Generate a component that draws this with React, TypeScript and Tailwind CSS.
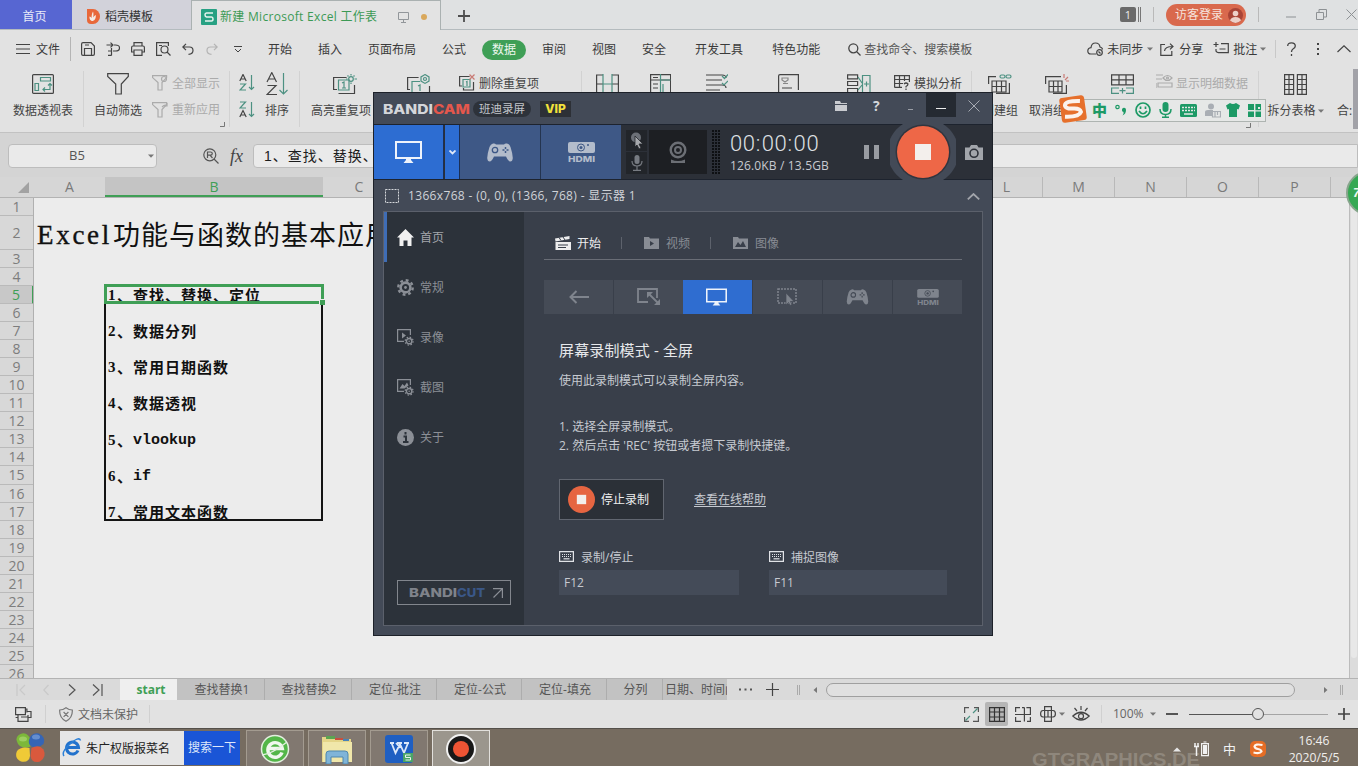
import React from "react";

type SvgProps = { w: number; h: number; vb?: string; sw?: number; className?: string; children: React.ReactNode };

const Ico = ({ w, h, vb, sw = 1.2, className = "", children }: SvgProps) => (
  <svg width={w} height={h} viewBox={vb ?? `0 0 ${w} ${h}`} fill="none" stroke="currentColor" strokeWidth={sw} className={`block shrink-0 ${className}`}>
    {children}
  </svg>
);

const Caret = ({ className = "" }: { className?: string }) => (
  <Ico w={6} h={4} className={`text-[#777] ${className}`}>
    <path d="M0 0.5h6L3 3.8z" fill="currentColor" stroke="none" />
  </Ico>
);

/* ---------- title bar ---------- */
const TitleBar = () => (
  <div className="flex h-[30px] shrink-0 border-b border-[#b4bbbe] bg-[#dfe1e2] text-[12px] leading-[30px]">
    <div className="h-[29px] w-[72px] shrink-0 bg-[#5766d2] pt-[2px] pr-[3px] text-center text-[#e8eaf8]">首页</div>
    <div className="flex h-[29px] w-[119px] shrink-0 items-center bg-[#d2d2da] pt-[4px] text-[#333]">
      <svg width="14" height="15" viewBox="0 0 14 15" className="ml-[14px]">
        <path d="M1 0h6a7 7.5 0 0 1 0 15H5a4 4 0 0 1-4-4z" fill="#e8683a" />
        <path d="M7 2.500c.8 2 .3 4 .3 6 .8-1 1.200-2 2.600-2.500 0 3-.8 5.500-3.200 6C4 12 3.300 9.500 3.500 7.500c1 .2 1.600.8 2 1.700C5.800 7 5.500 5 7 2.500z" fill="#f4ece6" />
      </svg>
      <span className="ml-[5px] whitespace-nowrap">稻壳模板</span>
    </div>
    <div className="flex h-[30px] w-[250px] shrink-0 items-center border-x border-t border-[#aab1b1] bg-[#e3e3e3] pt-[3px] text-[#3c9a55]">
      <svg width="16" height="16" viewBox="0 0 16 16" className="ml-[9px] shrink-0">
        <rect width="16" height="16" rx="1" fill="#27a183" />
        <path d="M12 4H5.500Q4 4 4 5.800T5.500 7.900h5Q12 8 12 10t-1.500 2H4" fill="none" stroke="#e6f4ef" strokeWidth="1.500" />
      </svg>
      <span className="ml-[3px] w-[160px] whitespace-nowrap text-[12px] tracking-[0.300px]">新建 Microsoft Excel 工作表</span>
      <Ico w={11} h={11} className="ml-[18px] text-[#92969a]" sw={1}>
        <path d="M.5 .5h10v7H.5zM5.500 8v2M3 10.500h5" />
      </Ico>
      <i className="ml-[12px] h-[6px] w-[6px] rounded-full bg-[#d9a85c]" />
    </div>
    <Ico w={12} h={12} sw={1.800} className="ml-[17px] mt-[10px] text-[#4e4e4e]">
      <path d="M6 0v12M0 6h12" />
    </Ico>
    <div className="ml-auto flex items-center text-[#666]">
      <span className="h-[15px] w-[16px] rounded-[2px] bg-[#6a6a6a] text-center text-[11px] leading-[15px] text-[#eee]">1</span>
      <i className="ml-[2px] h-[15px] w-[3px] border-x border-[#777]" />
      <i className="ml-[12px] h-[15px] w-px bg-[#b9b9b9]" />
      <div className="ml-[12px] flex h-[22px] w-[80px] items-center rounded-full bg-[#d9694d] pl-[9px] pt-[1px] text-[#f6e3dc]">
        <span className="whitespace-nowrap">访客登录</span>
        <svg width="15" height="15" viewBox="0 0 15 15" className="ml-[5px]">
          <circle cx="7.500" cy="7.500" r="7.500" fill="#a94436" />
          <circle cx="7.500" cy="5.500" r="2.800" fill="#edd0c8" />
          <path d="M2 12.600Q3 9 7.500 9T13 12.600Q10.500 15 7.500 15T2 12.600z" fill="#edd0c8" />
        </svg>
      </div>
      <i className="ml-[12px] h-[15px] w-px bg-[#b9b9b9]" />
      <Ico w={10} h={10} sw={1} className="ml-[27px] text-[#8d9194]"><path d="M0 7h10" /></Ico>
      <Ico w={11} h={11} sw={1} className="ml-[20px] text-[#8d9194]"><path d="M.5 3.500h7v7h-7zM3 3.500V.5h7.500V8H8" /></Ico>
      <Ico w={11} h={11} sw={1} className="ml-[19px] mr-[1px] text-[#8d9194]"><path d="M.5 .5l10 10M10.500 .5l-10 10" /></Ico>
    </div>
  </div>
);

/* ---------- menu row ---------- */
const MenuRow = () => (
  <div className="flex h-[36px] shrink-0 items-center whitespace-nowrap pt-[2px] text-[12px] leading-[18px] text-[#3a3a3a] [&>span]:translate-y-px">
    <Ico w={14} h={10} sw={1} className="ml-[16px] text-[#444]"><path d="M0 .5h14M0 5h14M0 9.500h14" /></Ico>
    <span className="ml-[6px] w-[24px]">文件</span>
    <i className="ml-[10px] h-[24px] w-px bg-[#b4b4b4]" />
    <Ico w={14} h={14} className="ml-[10px] text-[#444]"><path d="M.6 2Q.6.6 2 .6h8l3.400 3.400v8q0 1.400-1.400 1.400H2Q.6 13.400.6 12zM3.500 13V6.500h7V13M4 3h4" /></Ico>
    <Ico w={14} h={14} className="ml-[11px] text-[#444]"><path d="M.5 3h6M4.500.6L7 3 4.500 5.400M8 3h1.500q4 0 4 3t-4 3H7M5.500 6v7.500M2 9h3.500M2 13.400h3.500" /></Ico>
    <Ico w={14} h={14} className="ml-[11px] text-[#444]"><path d="M3 4V.6h8V4M3 10H.6V5.500Q.6 4 2 4h10q1.400 0 1.400 1.500V10H11M3 8h8v5.400H3z" /></Ico>
    <Ico w={15} h={14} className="ml-[11px] text-[#444]"><path d="M6 13.400H.6V.6h11.800V4" /><circle cx="8.500" cy="7.500" r="3.500" /><path d="M11 10l3.500 3.500M3 3.500h3" /></Ico>
    <Ico w={12} h={12} className="ml-[11px] text-[#444]"><path d="M4 .8L.8 4 4 7.200M1 4h6.500Q11 4 11 7.500T6.500 11.400" /></Ico>
    <Ico w={12} h={12} className="ml-[12px] text-[#b4b4b4]"><path d="M8 .8L11.200 4 8 7.200M11 4H4.500Q1 4 1 7.500t4.500 3.900" /></Ico>
    <Ico w={8} h={7} sw={1} className="ml-[16px] text-[#444]"><path d="M0 .5h8M1 3l3 3 3-3" /></Ico>
    <span className="ml-[26px]">开始</span>
    <span className="ml-[26px]">插入</span>
    <span className="ml-[26px]">页面布局</span>
    <span className="ml-[26px]">公式</span>
    <span className="ml-[16px] h-[20px] w-[44px] rounded-full bg-[#3f9f56] text-center leading-[19px] text-[#eef7ef]">数据</span>
    <span className="ml-[16px]">审阅</span>
    <span className="ml-[26px]">视图</span>
    <span className="ml-[26px]">安全</span>
    <span className="ml-[29px]">开发工具</span>
    <span className="ml-[29px]">特色功能</span>
    <Ico w={13} h={13} sw={1.300} className="ml-[28px] text-[#444]"><circle cx="5.300" cy="5.300" r="4.500" /><path d="M8.500 8.500l4 4" /></Ico>
    <span className="ml-[3px] text-[#555]">查找命令、搜索模板</span>
    <Ico w={17} h={14} className="ml-[115px] text-[#444]"><path d="M9 12H4Q.8 12 .8 9T4 5.600Q4.500 1 8.500 1T13 5q2.500.6 2.500 2.500" /><circle cx="12.500" cy="10.500" r="2.800" /><path d="M11.500 9.500l2 2" /></Ico>
    <span className="ml-[3px]">未同步</span>
    <Caret className="ml-[4px]" />
    <Ico w={14} h={13} className="ml-[7px] text-[#444]"><path d="M5 1.500H.8v10.800h11V8M4.500 8q.5-4.500 8-4.500M10 .6l3 2.900-3 2.900" /></Ico>
    <span className="ml-[5px]">分享</span>
    <Ico w={16} h={14} className="ml-[10px] text-[#444]"><path d="M3 0v5M.5 2.500h5M8 1.600h7.300v9H5.500q-1.500 0-2.500-1.500V7M6.500 7h6" /></Ico>
    <span className="ml-[4px]">批注</span>
    <Caret className="ml-[3px]" />
    <i className="ml-[9px] h-[18px] w-px bg-[#c8c8c8]" />
    <Ico w={9} h={14} sw={1.300} className="ml-[11px] text-[#444]"><path d="M.7 4Q.7 .8 4.500 .8T8.300 4Q8.300 5.800 6 7 4.500 8 4.500 10M4.500 12v2" /></Ico>
    <Ico w={2} h={12} className="ml-[21px] text-[#444]"><path d="M0 1h2M0 6h2M0 11h2" strokeWidth="2" /></Ico>
    <Ico w={14} h={8} className="ml-[18px] text-[#444]"><path d="M.5 7L7 .8 13.500 7" /></Ico>
  </div>
);

/* ---------- ribbon ---------- */
const G = "#4d9182";

const Big = ({ cls, icon, label }: { cls: string; icon: React.ReactNode; label?: React.ReactNode }) => (
  <div className={`flex shrink-0 flex-col items-center whitespace-nowrap ${cls}`}>
    <div className="flex h-[26px] items-center">{icon}</div>
    <div className="mt-[5px] flex h-[18px] items-center">{label}</div>
  </div>
);

const Filter = ({ s = 16 }: { s?: number }) => (
  <path d={s > 16 ? "M.7.7h20.600v2.800l-7 7.500v10H8.700V11L.7 3.500z" : "M.6.6h14v2L10 7.500V15H6V7.500L.6 2.600z"} />
);

const Ribbon = () => (
  <div className="flex h-[66px] shrink-0 overflow-hidden pt-[5px] text-[12px] leading-[18px] text-[#444]">
    <Big cls="w-[84px] border-r border-[#d2d2d2] h-[56px] pl-[3px]" label="数据透视表" icon={
      <Ico w={22} h={20} className="text-[#444]"><rect x=".6" y=".6" width="20.800" height="18.800" rx="1" /><g stroke={G}><path d="M8.500 3.500h10v3.500h-10zM3 9.500h3.500v7H3zM11 15.500h7V9.500M16 11.500l2-2 2 2M13 13.500l-2 2 2 2" /></g></Ico>} />
    <Big cls="w-[68px]" label="自动筛选" icon={<Ico w={22} h={22} className="text-[#444]"><Filter s={22} /></Ico>} />
    <div className="flex w-[78px] shrink-0 flex-col border-r border-[#d2d2d2] h-[56px] text-[#ababab]">
      <div className="mt-[3px] flex h-[18px] items-center"><Ico w={16} h={16}><Filter /><circle cx="12" cy="4" r="2.500" /></Ico><span className="ml-[4px] translate-y-px">全部显示</span></div>
      <div className="mt-[9px] flex h-[18px] items-center"><Ico w={16} h={16}><Filter /><path d="M10 5q3-3 5-1M15 1v3h-3" /></Ico><span className="ml-[4px]">重新应用</span></div>
      <Ico w={5} h={5} sw={1} className="ml-auto mr-[4px] mt-[3px] text-[#777]"><path d="M4.500 0v4.500H0" /></Ico>
    </div>
    <div className="flex w-[32px] shrink-0 flex-col pl-[9px]">
      <Ico w={17} h={17} className="mt-[3px] text-[#444]"><path d="M.8 7L4 .5 7.200 7M2 5h4" /><g stroke={G}><path d="M1 10h5.500L1 16h6M12.500 1v14.500M10 13l2.500 2.500L15 13" /></g></Ico>
      <Ico w={17} h={17} className="mt-[10px] text-[#444]"><path d="M.8 16L4 9.500 7.200 16M2 14h4" /><g stroke={G}><path d="M1 1h5.500L1 7h6M12.500 1v14.500M10 13l2.500 2.500L15 13" /></g></Ico>
    </div>
    <Big cls="w-[38px] border-r border-[#d2d2d2] h-[56px] pr-[7px]" label="排序" icon={
      <Ico w={22} h={24} className="text-[#444]"><path d="M1 10L5.800.6 10.500 10M2.600 7h6.500M1.500 13.500h8.500L1 22.500h10" /><path d="M17.500 1v21M13.500 18l4 4 4-4" stroke={G} /></Ico>} />
    <Big cls="w-[80px] ml-[1px]" label="高亮重复项" icon={
      <Ico w={25} h={21} className="ml-[8px] text-[#444]"><path d="M4 15.500H.6v-12h13M21.500 11v8.500h-16" /><g stroke={G}><path d="M5.500 6h10.500v10H5.500zM9 9l2-1v6M9 14h4" /><circle cx="18" cy="5" r="2.300" /><path d="M18 0v1.500M18 8.500V10M13 5h1.500M21.500 5H24M14.500 1.500l1 1M21.500 1.500l-1 1" /></g></Ico>} />
    <Big cls="ml-[7px] w-[60px]" icon={
      <Ico w={25} h={21} className="text-[#444]"><path d="M4 15.500H1.600v-12h11M23.500 12v8" /><g stroke={G}><path d="M6 18V7.500h8M12 12l2-1v6" /><path d="M19 .6l4 2.300v4.200L19 9.400l-4-2.300V2.900z" /><circle cx="19" cy="5" r="1.500" /></g></Ico>} />
    <div className="flex h-[56px] w-[134px] shrink-0 border-r border-[#d2d2d2] pl-[11px] pt-[3px]">
      <Ico w={17} h={17} className="text-[#444]"><path d="M3 12H.6V2.500h10M14.500 8v8H4.500v-2" /><path d="M4 5.500h7V13H4zM7 8l1-.5V12" stroke={G} /><path d="M10.500.5l5 5M15.500.5l-5 5" stroke="#c97a74" /></Ico>
      <span className="ml-[3px] translate-y-px whitespace-nowrap">删除重复项</span>
    </div>
    <Big cls="w-[50px]" icon={<Ico w={23} h={20} className="text-[#444]"><path d="M7 1H.6v19M16 1h6.400v19M.6 10H7M16 10h6.400" /><path d="M7 0v20M16 0v20M7 10h9" stroke={G} /></Ico>} />
    <Big cls="w-[56px]" icon={<Ico w={21} h={20} className="text-[#444]"><path d="M.6.6h20v19H.6zM.6 6h20M3 3.500h5M3 10h5M3 14h5" /><path d="M10.500 0v20M10.500 6h10M13 10v8" stroke={G} /></Ico>} />
    <Big cls="w-[58px]" icon={<Ico w={22} h={20} className="text-[#444]"><path d="M0 1h16q4 0 4 3M0 6h16M0 11h16q4 0 4 3M0 16h14" /><path d="M16 2l2.500 2.500L22 .5M16 9l2 2 4-4" stroke={G} /></Ico>} />
    <Big cls="w-[84px]" icon={<Ico w={21} h={20} className="text-[#444]"><path d="M.6 20V2Q.6.6 2 .6h18.400V16M4 14h10" /><path d="M4 4h6v2L7 8 4 6zM5 9.500h5" stroke="#888" /></Ico>} />
    <Big cls="w-[58px]" icon={<Ico w={24} h={20} className="text-[#444]"><path d="M.6.8h10v4H.6zM.6 7.500h10v4H.6zM.6 14.500h10v4H.6z" /><path d="M15.500 1.500h7.500V20h-7.500zM17 10h5M19.500 7.500v5M11 3l4 6M11 16l4-5" stroke={G} /></Ico>} />
    <div className="flex h-[56px] w-[84px] shrink-0 border-r border-[#d2d2d2] pl-[6px] pt-[3px]">
      <Ico w={16} h={16} className="text-[#444]"><path d="M.6 13.400V1.600h14.800V8M.6 5.500h14.800M.6 9.500H9M5.500 1.600v12M10.500 1.600V7M.6 13.400H8" /><path d="M10 10q2-2 4 0 0 1.500-2 2.500v1M12 14.500V16" /></Ico>
      <span className="ml-[4px] translate-y-px whitespace-nowrap">模拟分析</span>
    </div>
    <Big cls="w-[56px]" label="创建组" icon={<Ico w={24} h={20} className="text-[#444]"><path d="M8 2.600H.6V10M21.400 9v10.400H8M4 7h14v11H4zM4 12.500h14M8.500 7v11M13.500 7v11" /><g stroke={G}><rect x="12" y="1" width="5" height="3" rx="1.500" /><rect x="18" y="1" width="5" height="3" rx="1.500" /></g></Ico>} />
    <Big cls="w-[58px] pr-[8px]" label="取消组合" icon={<Ico w={24} h={20} className="ml-[8px] text-[#444]"><path d="M16 2.600H.6V10M21.400 11v8.400H8M4 7h13v11H4zM4 12.500h13M8.500 7v11M13 7v11" /><path d="M19 4V0M20 6l3-3M21 7h3" stroke="#c97a74" /></Ico>} />
    <Big cls="w-[68px] ml-[2px]" icon={<Ico w={23} h={20} className="text-[#444]"><path d="M.6.8h21.800v10H.6zM.6 5.800h21.800M8 .8v10M15 .8v10" /><path d="M8 14H.6v5.400H8M15 14h7.400v5.400H15M8.500 16.700h6M11.500 14v5.500" stroke={G} /></Ico>} />
    <div className="flex h-[56px] w-[103px] shrink-0 border-r border-[#d2d2d2] pt-[3px] text-[#ababab]">
      <Ico w={17} h={15}><path d="M0 1h7M0 5h6M2 9h14v4H2zM0 9v5" /><path d="M7 4q4.500-5 9 0-4.500 5-9 0z" /><circle cx="11.500" cy="4" r="1" /></Ico>
      <span className="ml-[3px] translate-y-px whitespace-nowrap">显示明细数据</span>
    </div>
    <Big cls="w-[73px]" label={<><span>拆分表格</span><Caret className="ml-[2px]" /></>} icon={<Ico w={23} h={21} className="text-[#444]"><path d="M.6.6h9v19.800h-9zM13.400.6h9v19.800h-9zM.6 5.500h9M.6 10.500h9M.6 15.500h9M13.400 5.500h9M13.400 10.500h9M13.400 15.500h9M5 .6v19.800M18 .6v19.800" /></Ico>} />
    <div className="mt-[31px] w-[18px] shrink-0 whitespace-nowrap pl-[5px]">合:</div>
    <i className="ml-auto mt-[-2px] h-[60px] w-[5px] shrink-0 bg-[#a2a2a8]" />
  </div>
);

/* ---------- formula bar ---------- */
const FormulaBar = () => (
  <div className="flex h-[45px] shrink-0 items-center border-t border-[#c2c2c2] bg-[#d4d4d4] pt-[1px] text-[12px]">
    <div className="ml-[8px] flex h-[24px] w-[149px] items-center rounded-[4px] border border-[#bdbdbd] bg-[#eaeaea] pt-[1px] text-[#555]">
      <span className="w-[136px] text-center text-[13px]">B5</span>
      <Caret className="ml-[3px]" />
    </div>
    <Ico w={17} h={16} className="ml-[46px] text-[#555]"><circle cx="6.800" cy="6.800" r="6" /><path d="M11 11l4.500 4.500M4.500 10V4h3q1.800 0 1.800 1.600T7.500 7.200h-3M7 7.200L9.500 10" /></Ico>
    <span className="ml-[10px] w-[23px] font-['Liberation_Serif'] text-[18px] italic leading-[20px] text-[#444]">fx</span>
    <div className="flex h-[24px] flex-1 items-center rounded-l-[4px] border border-[#bdbdbd] bg-[#eaeaea] pl-[10px] pt-[1px] text-[14px] tracking-[1px] text-[#1c1c1c]">
      <span className="font-['Liberation_Sans','Noto_Sans_CJK_SC',sans-serif]">1、查找、替换、</span>
    </div>
  </div>
);

/* ---------- sheet ---------- */
const farCols = ["L", "M", "N", "O", "P"];
const rowNums = Array.from({ length: 22 }, (_, i) => i + 5);
const entries: [string, string, string][] = [
  ["1", "、查找、替换、定位", ""],
  ["2", "、数据分列", ""],
  ["3", "、常用日期函数", ""],
  ["4", "、数据透视", ""],
  ["5", "、", "vlookup"],
  ["6", "、", "if"],
  ["7", "、常用文本函数", ""],
];

const Sheet = () => (
  <div className="flex min-h-0 flex-1 flex-col">
    <div className="flex h-[21px] shrink-0 overflow-hidden border-b border-[#b3b3b3] bg-[#d6d6d6] text-[14px] leading-[20px] text-[#7a7a7a]">
      <div className="flex w-[34px] shrink-0 items-end justify-end pb-[4px] pr-[5px]">
        <Ico w={11} h={11}><path d="M11 0v11H0z" fill="#a2a2a2" stroke="none" /></Ico>
      </div>
      <div className="w-[71px] shrink-0 text-center">A</div>
      <div className="w-[218px] shrink-0 border-b-2 border-[#3f9f56] bg-[#c4c4c4] text-center text-[#3f9f56]">B</div>
      <div className="w-[72px] shrink-0 text-center">C</div>
      <div className="w-[576px] shrink-0" />
      {farCols.map((c) => (
        <div key={c} className="w-[72px] shrink-0 border-r border-[#b9b9b9] text-center">{c}</div>
      ))}
    </div>
    <div className="flex min-h-0 flex-1">
      <div className="flex w-[34px] shrink-0 flex-col overflow-hidden border-r border-[#b0b0b0] bg-[#d8d8d8] text-center text-[14px] text-[#7d7d7d]">
        <div className="h-[18px] shrink-0 border-b border-[#bababa] leading-[17px]">1</div>
        <div className="h-[34px] shrink-0 border-b border-[#bababa] leading-[33px]">2</div>
        <div className="h-[18px] shrink-0 border-b border-[#bababa] leading-[17px]">3</div>
        <div className="h-[18px] shrink-0 border-b border-[#bababa] leading-[17px]">4</div>
        {rowNums.map((n) => (
          <div key={n} className={n === 5 ? "-mr-px h-[18.060px] shrink-0 border-b border-r-2 border-b-[#bababa] border-r-[#3f9f56] bg-[#c8c8c8] leading-[17px] text-[#3f9f56]" : "h-[18.060px] shrink-0 border-b border-[#bababa] leading-[17px]"}>{n}</div>
        ))}
      </div>
      <div className="flex-1 overflow-hidden bg-[#ececec] text-[#111]">
        <div className="mt-[18px] flex h-[34px] items-center whitespace-nowrap pl-[3px] pt-[4px]">
          <span className="w-[76px] font-['Liberation_Serif'] text-[27px] tracking-[2.700px] [-webkit-text-stroke:0.400px_#111]">Excel</span>
          <span className="text-[27px] tracking-[1px]">功能与函数的基本应用</span>
        </div>
        <div className="ml-[70px] mt-[34px] h-[237px] w-[219px] border-2 border-t-0 border-[#141414]">
          <div className="relative -ml-[2px] h-[20px] w-[220px] border-[3px] border-[#3f9f56]">
            <i className="absolute -bottom-[4px] -right-[4px] h-[6px] w-[6px] border-l border-t border-[#ececec] bg-[#3f9f56]" />
          </div>
          <div className="-mt-[21px] flex flex-col pl-[2px] text-[15px] font-bold">
            {entries.map(([n, zh, en]) => (
              <div key={n} className="flex h-[36.150px] items-start whitespace-nowrap leading-[24px]">
                <span className="w-[9px] font-['Liberation_Serif']">{n}</span>
                <span className="tracking-[1px]">{zh}</span>
                <span className="translate-y-px font-['Liberation_Mono']">{en}</span>
              </div>
            ))}
          </div>
        </div>
      </div>
      <div className="flex w-[9px] shrink-0 flex-col items-center border-l border-[#bcbcbc] bg-[#dcdcdc]">
        <i className="h-[460px] w-[6px] rounded-b-[3px] bg-[#e8e8e8]" />
      </div>
    </div>
  </div>
);

/* ---------- sheet tabs + status ---------- */
const tabCls = "shrink-0 overflow-hidden border-r border-[#adadad] bg-[#c2c2c2] text-center whitespace-nowrap";
const SheetTabs = () => (
  <div className="flex h-[22px] shrink-0 items-stretch border-t border-[#b3b3b3] bg-[#dadada] text-[12px] leading-[22px] text-[#555]">
    <div className="flex w-[120px] shrink-0 items-center">
      <Ico w={10} h={12} className="ml-[16px] text-[#c9c9c9]"><path d="M1 0v12M9 1L4 6l5 5" /></Ico>
      <Ico w={6} h={12} className="ml-[17px] text-[#c9c9c9]"><path d="M5.500 1L.8 6l4.700 5" /></Ico>
      <Ico w={8} h={12} className="ml-[19px] text-[#555]"><path d="M1 .5L7 6l-6 5.500" /></Ico>
      <Ico w={11} h={12} className="ml-[16px] text-[#555]"><path d="M1 .5L7 6l-6 5.500M10 0v12" /></Ico>
    </div>
    <div className="w-[57px] shrink-0 bg-[#efefef] pl-[5px] text-center font-bold text-[#3f9f56]">start</div>
    <div className={`w-[88px] pl-[3px] ${tabCls}`}>查找替换1</div>
    <div className={`w-[87px] pl-[2px] ${tabCls}`}>查找替换2</div>
    <div className={`w-[85px] pl-[2px] ${tabCls}`}>定位-批注</div>
    <div className={`w-[85px] pl-[2px] ${tabCls}`}>定位-公式</div>
    <div className={`w-[85px] pl-[2px] ${tabCls}`}>定位-填充</div>
    <div className={`w-[56px] pl-[2px] ${tabCls}`}>分列</div>
    <div className="w-[64px] shrink-0 overflow-hidden whitespace-nowrap bg-[#c2c2c2] pl-[2px]">日期、时间函数</div>
    <div className="flex flex-1 items-center">
      <Ico w={13} h={3} className="ml-[12px] text-[#555]"><path d="M0 1.500h2M5.500 1.500h2M11 1.500h2" strokeWidth="2" /></Ico>
      <Ico w={13} h={13} className="ml-[14px] text-[#444]"><path d="M6.500 0v13M0 6.500h13" /></Ico>
      <i className="ml-[18px] h-[10px] w-[3px] border-x border-[#aaa]" />
      <Ico w={4} h={6} className="ml-[13px] text-[#777]"><path d="M4 0v6L.5 3z" fill="currentColor" stroke="none" /></Ico>
      <i className="ml-[9px] h-[14px] w-[469px] rounded-full border border-[#9f9f9f] bg-[#e0e0e0]" />
      <Ico w={4} h={6} className="ml-[29px] text-[#777]"><path d="M0 0v6l3.500-3z" fill="currentColor" stroke="none" /></Ico>
      <i className="ml-[12px] h-[10px] w-[3px] border-x border-[#aaa]" />
    </div>
  </div>
);

const StatusBar = () => (
  <div className="flex h-[28px] shrink-0 items-center bg-[#e2e2e2] text-[12px] text-[#666]">
    <Ico w={17} h={15} className="ml-[15px] text-[#444]"><path d="M.6.6h9.800v7H.6zM10.400 2h1.500v3.500M3 7.600v6.800h10V10.500M.6 10.500H3M6 10h7M12 4.500h4v6h-3V8" /></Ico>
    <i className="ml-[13px] h-[18px] w-px bg-[#d0d0d0]" />
    <Ico w={14} h={15} className="ml-[13px] text-[#777]"><path d="M7 .7Q10 3 13.300 3 13.800 11 7 14.300.2 11 .7 3 4 3 7 .7zM4.600 5l4.800 4.800M9.400 5L4.600 9.800" /></Ico>
    <span className="ml-[5px] translate-y-px whitespace-nowrap">文档未保护</span>
    <i className="ml-[11px] h-[18px] w-px bg-[#d0d0d0]" />
    <div className="ml-auto flex items-center">
      <Ico w={15} h={15} className="text-[#555]"><path d="M5 .6H.6V6M14.400 9v5.400H9M.6 10v4.400H5M10 .6h4.400V5" /><path d="M9 6l4.500-4.500M1.500 13.500L6 9" stroke={G} /></Ico>
      <span className="ml-[6px] flex h-[24px] w-[23px] items-center justify-center rounded-[2px] bg-[#b6b6b6] text-[#333]">
        <Ico w={16} h={15}><path d="M.6.6h14.800v13.800H.6zM.6 5h14.800M.6 10h14.800M5.500.6v14M10.500.6v14" /></Ico>
      </span>
      <Ico w={16} h={15} className="ml-[7px] text-[#444]"><path d="M.6 5V.6H5M.6 10v4.400H6M0 7.500h15.400V.6h-4M9.400.6v13.800M12 14.400h3.400V10M7 .6h2.400" /></Ico>
      <Ico w={16} h={16} className="ml-[9px] text-[#444]"><path d="M4.600.6h6.800v14.800H4.600zM4.600 4.500H3Q.6 4.500.6 7.700T3 11h1.600M11.400 4.500H13q2.400 0 2.400 3.200T13 11h-1.600M4.600 4.500h6.800M4.600 11h6.800M8 4.500V11" /></Ico>
      <Caret className="ml-[3px]" />
      <Ico w={18} h={16} className="ml-[7px] text-[#444]"><path d="M.8 10Q9 2.500 17.200 10 9 18 .8 10zM9 0v4M2.500 2L5 5M15.500 2L13 5" /><circle cx="9" cy="10.200" r="2.500" /></Ico>
      <i className="ml-[11px] h-[18px] w-px bg-[#d0d0d0]" />
      <span className="ml-[11px] w-[33px]">100%</span>
      <Caret className="ml-[4px]" />
      <i className="ml-[10px] h-[2px] w-[12px] bg-[#555]" />
      <Ico w={139} h={14} className="ml-[11px] text-[#555]" sw={1}><path d="M0 7.500h63" /><path d="M75 7.500h64" stroke="#a5a5a5" /><circle cx="69" cy="7" r="5.500" /></Ico>
      <Ico w={12} h={12} sw={1.700} className="ml-[10px] mr-[8px] text-[#444]"><path d="M6 0v12M0 6h12" /></Ico>
    </div>
  </div>
);

/* ---------- taskbar ---------- */
const taskBtn = "flex h-[37px] w-[58px] shrink-0 items-center justify-center border border-b-0";
const Taskbar = () => (
  <div className="flex h-[38px] shrink-0 items-start overflow-hidden border-t border-[#54504a] bg-[#766c60] pt-px text-[12px]">
    <svg width="32" height="32" viewBox="0 0 32 32" className="ml-[15px] mt-[2px] shrink-0">
      <path d="M15.500 14.500Q8 18 3 12-1 5 5.500 2T16 8z" fill="#7cb83a" />
      <path d="M14 8Q16 0 24 1.500 31 5 28.500 12 23 17 16.500 14.500 13 12 14 8z" fill="#3565b5" />
      <path d="M14.500 16Q6 14 2 19-1 26 6 29.500 14 31 15 24z" fill="#efca37" />
      <path d="M16.500 16Q24 12 28.500 17.500 32 25 25 29.500 17 32 15.500 24z" fill="#d9593d" />
      <ellipse cx="8" cy="7" rx="4" ry="2.500" fill="#b4dc7c" opacity=".6" /><ellipse cx="21" cy="5" rx="4" ry="2.500" fill="#86aadf" opacity=".6" />
    </svg>
    <div className="ml-[13px] mt-[1px] flex h-[34px] w-[124px] shrink-0 items-center bg-[#e6e6e6] text-[#222]">
      <svg width="20" height="20" viewBox="0 0 20 20" className="ml-[2px] shrink-0">
        <path d="M16 12.500A6 6 0 1 1 16.500 9.500H5.500" fill="none" stroke="#2272cc" strokeWidth="3" />
        <path d="M2 18Q-1 14 8 6T18.500 2.500" fill="none" stroke="#2c80d8" strokeWidth="1.500" />
      </svg>
      <span className="ml-[4px] translate-y-px whitespace-nowrap">朱广权版报菜名</span>
    </div>
    <div className="mt-[1px] h-[34px] w-[56px] shrink-0 whitespace-nowrap bg-[#1a55d6] text-center leading-[34px] text-[#dfe8fa]">搜索一下</div>
    <div className={`ml-[6px] border-[#a39b90] bg-[#817870] ${taskBtn}`}>
      <svg width="30" height="30" viewBox="0 0 30 30">
        <circle cx="15" cy="15" r="13.500" fill="#53b648" stroke="#e3efdf" strokeWidth="1.500" />
        <path d="M22 18.500A7.300 7.300 0 1 1 22.300 14.500H9" fill="none" stroke="#f0f7ee" strokeWidth="3.400" />
        <path d="M2 21Q12 20 27 8" fill="none" stroke="#e3efdf" strokeWidth="1.300" />
      </svg>
    </div>
    <div className={`ml-[4px] border-[#a39b90] bg-[#817870] ${taskBtn}`}>
      <svg width="32" height="30" viewBox="0 0 32 30">
        <path d="M1 3h10l2 2h17v23H1z" fill="#e4d588" /><path d="M2 8h29v20H2z" fill="#f0e7aa" />
        <path d="M5 2h9v3H5z" fill="#5aa552" /><path d="M14 4h8v2h-8z" fill="#c94f3e" /><path d="M22 5h6v2h-6z" fill="#4a82b8" />
        <path d="M5 30V20q0-3 3-3h16q3 0 3 3v10h-5v-7H10v7z" fill="#7fb4d8" stroke="#4f87ae" />
      </svg>
    </div>
    <div className={`ml-[4px] border-[#a39b90] bg-[#817870] ${taskBtn}`}>
      <svg width="30" height="30" viewBox="0 0 30 30">
        <rect x="1" y="1" width="28" height="28" rx="3" fill="#1f5fc2" />
        <path d="M6 9h4M7.500 9l4 10 4.500-9 4 9L24 9M13 9h5M20 9h5M12 9l4.500 5" fill="none" stroke="#dce8fa" strokeWidth="1.800" />
        <rect x="19" y="19" width="10" height="9" fill="#4aa567" /><path d="M26.500 21h-5v2.500h5V26h-5" fill="none" stroke="#e8f5ec" />
      </svg>
    </div>
    <div className={`ml-[4px] border-[#e2e0dc] bg-[#9b968d] ${taskBtn}`}>
      <svg width="32" height="32" viewBox="0 0 32 32"><circle cx="16" cy="16" r="14" fill="#181818" stroke="#f2f2f2" strokeWidth="2" /><circle cx="16" cy="16" r="8" fill="#ee5434" /></svg>
    </div>
    <svg width="172" height="20" viewBox="0 0 172 20" className="ml-[542px] mt-[20px] shrink-0">
      <text x="0" y="16" textLength="168" lengthAdjust="spacingAndGlyphs" fontFamily="Liberation Sans" fontWeight="bold" fontSize="19" fill="#948c82" opacity=".85">GTGRAPHICS.DE</text>
    </svg>
    <div className="-ml-[31px] mt-[8px] flex h-[22px] items-center">
      <Ico w={8} h={5} className="text-[#e6e6e6]"><path d="M0 4.500h8L4 .5z" fill="currentColor" stroke="none" /></Ico>
      <Ico w={16} h={16} className="ml-[13px] text-[#f2f2f2]"><path d="M1 2v3M4 2v3M0 5.500h5M2.500 5v10" strokeWidth="1.500" /><path d="M7.600 2.600h6.800v12H7.600zM9.500 1h3" /><path d="M9 4h4v9H9z" fill="currentColor" stroke="none" /></Ico>
      <span className="ml-[13px] text-[13px] leading-[20px] text-[#f2f2f2]">中</span>
    </div>
    <svg width="18" height="18" viewBox="0 0 18 18" className="ml-[13px] mt-[10px] shrink-0">
      <rect x="1" y="1" width="16" height="16" rx="5" fill="#e56d25" />
      <path d="M13.500 5Q6 3.500 5.500 6.500 6 8.500 9 9t3.500 2.500Q11 14 4.500 12.500" fill="none" stroke="#fff5ec" strokeWidth="2.200" />
    </svg>
    <div className="ml-[16px] mt-[2px] w-[62px] shrink-0 text-center text-[12.200px] leading-[17px] text-[#f0efed]">
      <div>16:46</div>
      <div>2020/5/5</div>
    </div>
  </div>
);

/* ---------- recorder window ---------- */
const Pad = ({ w, h, hole }: { w: number; h: number; hole: string }) => (
  <svg width={w} height={h} viewBox="0 0 26 19" className="block shrink-0">
    <path d="M6 .5Q8 0 9 1.500h8Q18 0 20 .5q2.500.5 3.500 3.500 2 6 2.300 11-.3 3.500-2.500 3.500-2 0-4.300-5H7q-2.300 5-4.300 5Q.5 18.500.2 15 .5 10 2.500 4 3.500 1 6 .5z" fill="currentColor" />
    <circle cx="8" cy="7" r="2.700" fill="none" stroke={hole} strokeWidth="1.300" />
    <path d="M18.500 4v2M18.500 8v2M15.500 7h2M19.500 7h2" stroke={hole} strokeWidth="1.500" />
  </svg>
);

const Hdmi = ({ w, h, hole }: { w: number; h: number; hole: string }) => (
  <svg width={w} height={h} viewBox="0 0 27 20" className="block shrink-0">
    <rect y="0" width="27" height="11" rx="2" fill="currentColor" />
    <circle cx="13" cy="5.500" r="3.500" fill="none" stroke={hole} strokeWidth="1" />
    <circle cx="13" cy="5.500" r="1.500" fill={hole} /><circle cx="20" cy="3" r="1" fill={hole} />
    <text x="0" y="19.500" textLength="27" lengthAdjust="spacingAndGlyphs" fontFamily="Inter" fontWeight="800" fontSize="8" fill="currentColor">HDMI</text>
  </svg>
);

const Monitor = ({ w, h }: { w: number; h: number }) => (
  <svg width={w} height={h} viewBox="0 0 27 22" className="block shrink-0"><path d="M1 1h25v16H1z" fill="none" stroke="currentColor" strokeWidth="2" /><path d="M11 17h5v2l2.500 3h-10l2.500-3z" fill="currentColor" /></svg>
);

const StopDot = ({ s }: { s: number }) => (
  <svg width={s} height={s} viewBox="0 0 52 52" className="block shrink-0"><circle cx="26" cy="26" r="26" fill="#e66541" /><rect x="17" y="17" width="18" height="18" fill="#f3efec" /></svg>
);

const Keyb = () => (
  <Ico w={15} h={11} sw={1.200} className="text-[#e0e2e6]"><path d="M.6.6h13.800v9.800H.6z" /><path d="M3 3.500h9M3 5.500h9" strokeDasharray="1 1" /><path d="M4.500 7.800h6" /></Ico>
);

const gearPath = (
  <g><circle cx="8" cy="8" r="4.600" fill="none" stroke="currentColor" strokeWidth="2.400" /><circle cx="8" cy="8" r="6.800" fill="none" stroke="currentColor" strokeWidth="2.200" strokeDasharray="2.670 2.670" /><circle cx="8" cy="8" r="1.300" fill="currentColor" stroke="none" /></g>
);

const side: { label: string; icon: React.ReactNode; active?: boolean }[] = [
  { label: "首页", active: true, icon: <Ico w={17} h={17} className="text-[#f1f1f1]"><path d="M8.500 0L17 8.500h-2.500V17h-4v-5.500h-4V17h-4V8.500H0z" fill="currentColor" stroke="none" /></Ico> },
  { label: "常规", icon: <Ico w={17} h={17} vb="0 0 16 16">{gearPath}</Ico> },
  { label: "录像", icon: <Ico w={17} h={17}><path d="M7 12.400H.6V.6h12.800V6" /><path d="M5 3.500L9 6.500 5 9.500z" fill="currentColor" stroke="none" /><g transform="translate(7.500 7.500) scale(.58)">{gearPath}</g></Ico> },
  { label: "截图", icon: <Ico w={17} h={17}><path d="M7 12.400H.6V.6h12.800V6" /><path d="M2.500 9.500l3-4.500 2 2L10 3.500l1.500 3-4 3z" fill="currentColor" stroke="none" /><g transform="translate(7.500 7.500) scale(.58)">{gearPath}</g></Ico> },
  { label: "关于", icon: <Ico w={17} h={17}><circle cx="8.500" cy="8.500" r="8.500" fill="currentColor" stroke="none" /><path d="M8.500 3v2.500M6.500 7.500h2.500v5M6 13h5.500" stroke="#2c323a" strokeWidth="2" /></Ico> },
];

const modeCls = "flex h-[34px] w-[69px] shrink-0 items-center justify-center";

const Recorder = () => (
  <div className="absolute left-[373px] top-[92px] flex h-[544px] w-[620px] flex-col border border-[#1d2129] bg-[#434a57] text-[12px] text-[#c6cad1]">
    <div className="flex h-[31px] shrink-0 items-start">
      <svg width="87" height="13" viewBox="0 0 87 13" className="ml-[9px] mt-[9px]">
        <text x="0" y="11.500" textLength="50" lengthAdjust="spacingAndGlyphs" fontFamily="Inter" fontWeight="800" fontSize="13" fill="#d4d6da">BANDI</text>
        <text x="50" y="11.500" textLength="37" lengthAdjust="spacingAndGlyphs" fontFamily="Inter" fontWeight="800" fontSize="13" fill="#e4574c">CAM</text>
      </svg>
      <span className="ml-[3px] mt-[8px] h-[16px] w-[58px] rounded-full bg-[#2d323a] text-center text-[11.500px] leading-[16px] text-[#c3c6cb]">班迪录屏</span>
      <span className="ml-[9px] mt-[8px] h-[16px] w-[31px] bg-[#2d3036] text-center font-['Inter'] text-[12px] font-extrabold leading-[16px] text-[#f2e23c]">VIP</span>
      <Ico w={12} h={10} className="ml-[264px] mt-[8px] text-[#c9cbd0]"><path d="M0 0h5l1 2h6v1H0zM0 4h12v6H0z" fill="currentColor" stroke="none" /></Ico>
      <span className="ml-[26px] mt-[4px] w-[8px] text-[14px] font-bold leading-[18px] text-[#d5d7db]">?</span>
      <i className="ml-[27px] mt-[16px] h-px w-[5px] bg-[#9a9ea6]" />
      <div className="ml-[13px] flex h-[24px] w-[30px] justify-center bg-[#252a32]"><i className="mt-[15px] h-px w-[10px] bg-[#eceded]" /></div>
      <Ico w={12} h={12} sw={1} className="ml-[12px] mt-[7px] text-[#a7abb3]"><path d="M.5.5l11 11M11.500.5l-11 11" /></Ico>
    </div>

    <div className="flex h-[56px] shrink-0 border-y border-[#1d232e] bg-[#2c3038]">
      <div className="flex w-[70px] shrink-0 items-center justify-center border-r border-[#1b2f55] bg-[#2d6dd2] text-[#eef3fb]"><Monitor w={27} h={22} /></div>
      <div className="ml-px flex w-[15px] shrink-0 items-center justify-center border-r border-[#1b2f55] bg-[#2d6dd2]"><Ico w={7} h={5} sw={1.800} className="text-[#dfe8f8]"><path d="M.5.5l3 3 3-3" /></Ico></div>
      <div className="flex w-[81px] shrink-0 items-center justify-center border-r border-[#24344f] bg-[#3e5886] text-[#b3bccb]"><Pad w={26} h={19} hole="#3e5886" /></div>
      <div className="flex w-[80px] shrink-0 items-center justify-center bg-[#3e5886] text-[#b3bccb]"><Hdmi w={27} h={20} hole="#3e5886" /></div>
      <div className="ml-[5px] mt-[5px] flex w-[21px] shrink-0 flex-col gap-px text-[#777b82]">
        <div className="flex h-[21px] items-center justify-center bg-[#22252a]"><Ico w={14} h={17} className="text-[#6c7077]"><circle cx="6" cy="5.500" r="5" fill="currentColor" stroke="none" /><path d="M5 4l8 8H9l2 4-2 1-2-4-2 2z" fill="#a6a8ac" stroke="#22252a" strokeWidth=".8" /></Ico></div>
        <div className="flex h-[22px] items-center justify-center bg-[#22252a]"><Ico w={12} h={16}><rect x="3.500" y="0" width="5" height="9" rx="2.500" fill="currentColor" stroke="none" /><path d="M1 6q0 5 5 5t5-5M6 11v4M2 15.400h8" /></Ico></div>
      </div>
      <div className="ml-[2px] mt-[5px] flex h-[44px] w-[58px] shrink-0 items-center justify-center bg-[#1d1f23]">
        <Ico w={18} h={23} className="text-[#6c6f75]"><circle cx="9" cy="9" r="7.300" strokeWidth="2.400" /><circle cx="9" cy="9" r="3" strokeWidth="2" /><path d="M2 18.500q7 3 14 0V22H2z" fill="currentColor" stroke="none" /></Ico>
      </div>
      <Ico w={8} h={44} className="ml-[5px] mt-[5px] text-[#0e1013]"><path d="M1 0v44M4 0v44M7 0v44" strokeWidth="2" strokeDasharray="2 1" /></Ico>
      <div className="ml-[10px] w-[110px] shrink-0 pt-[9px]">
        <svg width="92" height="18" viewBox="0 0 92 18" className="block"><text x="0 12.800 25.800 31.800 44.600 57.600 63.600 76.400" y="17" fontFamily="Roboto" fontWeight="300" fontSize="22" fill="#dfe1e4">00:00:00</text></svg>
        <div className="mt-[5px] whitespace-nowrap leading-[18px] tracking-[0.150px] text-[#c8cad0]">126.0KB / 13.5GB</div>
      </div>
      <div className="ml-[24px] mt-[20px] flex gap-[5px]"><i className="h-[14px] w-[5px] bg-[#989ba1]" /><i className="h-[14px] w-[5px] bg-[#989ba1]" /></div>
      <div className="-my-px ml-[11px] h-[56px] w-[66px] shrink-0">
        <svg width="66" height="56" viewBox="0 0 66 56" className="block"><path d="M13 0h40a33 33 0 0 1 0 56H13a33 33 0 0 1 0-56z" fill="#434a57" /><circle cx="33" cy="28" r="27.500" fill="#31353f" /><circle cx="33" cy="28" r="26" fill="#ee6747" /><rect x="25" y="20" width="16" height="16" fill="#f3efec" /></svg>
      </div>
      <svg width="18" height="15" viewBox="0 0 18 15" className="ml-[9px] mt-[20px] shrink-0"><path d="M0 2.500h4.500L6 0h6l1.500 2.500H18V15H0z" fill="#a2a5ab" /><circle cx="9" cy="8.300" r="4" fill="none" stroke="#2c3038" strokeWidth="1.600" /></svg>
    </div>

    <div className="flex h-[31px] shrink-0 items-center pt-[1px]">
      <Ico w={14} h={14} sw={1} className="ml-[11px] text-[#d6d8dc]"><path d="M.5.5h13v13H.5z" strokeDasharray="2 1" /></Ico>
      <span className="ml-[9px] whitespace-nowrap tracking-[0.340px] text-[#d0d3d8]">1366x768 - (0, 0), (1366, 768) - 显示器 1</span>
      <Ico w={13} h={7} sw={1.800} className="ml-auto mr-[12px] text-[#a2a5ab]"><path d="M.8 6.300L6.500 1l5.700 5.300" /></Ico>
    </div>

    <div className="ml-[9px] flex h-[415px] w-[600px] shrink-0 border border-[#5b606b] bg-[#393f4a]">
      <div className="flex w-[140px] shrink-0 flex-col bg-[#2c323a] text-[#8b8f96]">
        {side.map((s) => (
          <div key={s.label} className={s.active ? "flex h-[50px] items-center border-l-[3px] border-[#3f6db5] pl-[10px] text-[#a4a7ac]" : "flex h-[50px] items-center pl-[13px]"}>
            {s.icon}
            <span className="ml-[6px] translate-y-px">{s.label}</span>
          </div>
        ))}
        <div className="ml-[13px] mt-[118px] flex h-[25px] w-[114px] items-center border border-[#82868d]">
          <svg width="77" height="12" viewBox="0 0 77 12" className="ml-[11px]">
            <text x="0" y="10" textLength="48" lengthAdjust="spacingAndGlyphs" fontFamily="Inter" fontWeight="800" fontSize="11.800" fill="#7f838b">BANDI</text>
            <text x="48" y="10" textLength="28" lengthAdjust="spacingAndGlyphs" fontFamily="Inter" fontWeight="800" fontSize="11.800" fill="#3a5787">CUT</text>
          </svg>
          <Ico w={10} h={10} className="ml-[7px]"><path d="M0 .6h9.400V10M9.400.6L.5 9.500" /></Ico>
        </div>
      </div>

      <div className="flex flex-1 flex-col pl-[20px]">
        <div className="flex h-[48px] w-[418px] shrink-0 items-center border-b border-[#696d76] pt-[14px] text-[#888c94] [&>span]:translate-y-px">
          <Ico w={16} h={14} className="ml-[11px] text-[#ededee]"><path d="M0 2.500L14.500 0v3L.500 5.500zM.5 6H16v8H.5z" fill="currentColor" stroke="none" /><path d="M3 9h10M3 11.500h8M4 1.500l2 3M8 1l2 3" stroke="#393f4a" strokeWidth="1" /></Ico>
          <span className="ml-[6px] text-[#ededee]">开始</span>
          <i className="ml-[20px] h-[12px] w-px bg-[#5d626c]" />
          <Ico w={15} h={12} className="ml-[22px]"><path d="M0 0h5l1 1.500h9V12H0z" fill="currentColor" stroke="none" /><path d="M6 4l4 2.500L6 9z" fill="#393f4a" stroke="none" /></Ico>
          <span className="ml-[7px]">视频</span>
          <i className="ml-[20px] h-[12px] w-px bg-[#5d626c]" />
          <Ico w={15} h={12} className="ml-[22px]"><path d="M0 0h5l1 1.500h9V12H0z" fill="currentColor" stroke="none" /><path d="M2 10l3-5 2.500 3L10 4l3 6z" fill="#393f4a" stroke="none" /></Ico>
          <span className="ml-[7px]">图像</span>
        </div>
        <div className="mt-[20px] flex w-[418px] justify-between text-[#7f848d]">
          <div className={`bg-[#454b56] ${modeCls}`}><Ico w={20} h={14} sw={2}><path d="M7.500 1L1.500 7l6 6M1.500 7H20" /></Ico></div>
          <div className={`bg-[#454b56] ${modeCls}`}><Ico w={24} h={18} sw={1.800}><path d="M11 14H1V1h19v9M11 5l11 11" /><path d="M10 4h6l-6 6zM23 17h-6l6-6z" fill="currentColor" stroke="none" /></Ico></div>
          <div className={`-ml-px bg-[#2f6dd0] pr-[2px] text-[#eef3fb] ${modeCls}`}><Monitor w={21} h={18} /></div>
          <div className={`bg-[#454b56] ${modeCls}`}><Ico w={20} h={18} sw={1.500} className="ml-[-2px]"><path d="M1 1h18v14H1z" strokeDasharray="2 1" /><path d="M9 5l8 8.500h-3.500l1.500 3-2 1-1.500-3L9 17z" fill="currentColor" stroke="#454b56" strokeWidth=".7" /></Ico></div>
          <div className={`bg-[#454b56] ${modeCls}`}><Pad w={23} h={16} hole="#454b56" /></div>
          <div className={`bg-[#454b56] ${modeCls}`}><Hdmi w={22} h={16} hole="#454b56" /></div>
        </div>
        <div className="ml-[15px] mt-[25px] whitespace-nowrap text-[15px] leading-[22px] tracking-[0.150px] text-[#e6e8eb]">屏幕录制模式 - 全屏</div>
        <div className="ml-[15px] mt-[10px] whitespace-nowrap leading-[19px]">使用此录制模式可以录制全屏内容。</div>
        <div className="ml-[15px] mt-[27px] whitespace-nowrap leading-[19px]">1. 选择全屏录制模式。<br />2. 然后点击 'REC' 按钮或者摁下录制快捷键。</div>
        <div className="ml-[15px] mt-[24px] flex items-center">
          <div className="flex h-[41px] w-[105px] items-center border border-[#616670] bg-[#2b3037] pl-[8px] text-[#eceded]"><StopDot s={27} /><span className="ml-[6px] whitespace-nowrap">停止录制</span></div>
          <span className="ml-[30px] whitespace-nowrap underline underline-offset-2">查看在线帮助</span>
        </div>
        <div className="ml-[15px] mt-[27px] flex gap-[30px] whitespace-nowrap">
          <div className="w-[180px]">
            <div className="flex h-[19px] items-center"><Keyb /><span className="ml-[7px] translate-y-px">录制/停止</span></div>
            <div className="mt-[4px] h-[25px] bg-[#444b58] pl-[5px] leading-[25px]">F12</div>
          </div>
          <div className="w-[178px]">
            <div className="flex h-[19px] items-center"><Keyb /><span className="ml-[7px] translate-y-px">捕捉图像</span></div>
            <div className="mt-[4px] h-[25px] bg-[#444b58] pl-[5px] leading-[25px]">F11</div>
          </div>
        </div>
      </div>
    </div>
  </div>
);

/* ---------- input method bar ---------- */
const ImeBar = () => (
  <div className="absolute left-[1058px] top-[93px] flex h-[32px] items-center text-[#1d9a66]">
    <svg width="30" height="32" viewBox="0 0 30 32" className="z-10 block shrink-0">
      <g transform="rotate(-8 15 16)"><rect x="2.500" y="3.500" width="25" height="25" rx="3" fill="#e6702c" /><path d="M23 9Q8 6.500 7.500 11.500 8 15 15 15.500t7.500 4.500Q20 25 6 22.500" fill="none" stroke="#fbf3ec" strokeWidth="4" /></g>
    </svg>
    <div className="-ml-[12px] mt-[2px] flex h-[23px] w-[190px] items-center border border-[#aeb4b1] bg-[#e6e8e7] pl-[15px]">
      <span className="text-[15px] font-black leading-[20px]">中</span>
      <Ico w={12} h={12} className="ml-[8px]"><circle cx="2.500" cy="3" r="1.700" /><path d="M7 5.500a2 2 0 1 1 4 .5q0 4-3.500 5.500 1.500-2 1-3.500A2 2 0 0 1 7 5.500z" fill="currentColor" stroke="none" /></Ico>
      <Ico w={16} h={16} sw={1.700} className="ml-[8px]"><circle cx="8" cy="8" r="7" /><path d="M4 9q4 5.500 8 0M5.500 4.500v2.500M10.500 4.500v2.500" /></Ico>
      <Ico w={13} h={16} sw={1.500} className="ml-[8px]"><rect x="3.500" y="0" width="6" height="10" rx="3" fill="currentColor" stroke="none" /><path d="M1 7q0 5.500 5.500 5.500T12 7M6.500 12v3.300M3 15.300h7" /></Ico>
      <Ico w={17} h={13} className="ml-[8px]"><rect width="17" height="13" rx="1.500" fill="currentColor" stroke="none" /><path d="M2 3.500h13M2 6.500h13" stroke="#e6e8e7" strokeWidth="1.500" strokeDasharray="2 1" /><path d="M4 10h9" stroke="#e6e8e7" strokeWidth="1.500" /></Ico>
      <Ico w={16} h={15} className="ml-[8px] text-[#a9aeb4]"><circle cx="6" cy="3.500" r="3" fill="currentColor" stroke="none" /><path d="M0 13V9q0-2 3-2h5v6z" fill="currentColor" stroke="none" /><path d="M7.500 8.500h8v5.500h-8zM10 9v5M12.500 9v3" /></Ico>
      <Ico w={14} h={14} className="ml-[5px]"><path d="M4 0q3 2 6 0l4 2.500-1.500 4L11 6v8H3V6l-1.500.5L0 2.500z" fill="currentColor" stroke="none" /></Ico>
      <Ico w={13} h={13} className="ml-[8px]"><path d="M0 0h6v6H0zM0 7.500h6V13H0zM7.500 7.500H13V13H7.500z" fill="currentColor" stroke="none" /><path d="M8 .6h4.400v5H8z" fill="currentColor" /><path d="M10 3h2v2h-2z" fill="#e6e8e7" stroke="none" /></Ico>
    </div>
  </div>
);

export default function App() {
  return (
    <div className="relative flex h-[766px] w-[1358px] flex-col overflow-hidden bg-[#e2e2e2] font-['Open_Sans','Noto_Sans_CJK_SC',sans-serif]">
      <TitleBar />
      <MenuRow />
      <Ribbon />
      <FormulaBar />
      <Sheet />
      <SheetTabs />
      <StatusBar />
      <Taskbar />
      <Recorder />
      <ImeBar />
      <Ico w={5} h={5} sw={1} className="absolute left-[1246px] top-[123px] text-[#777]"><path d="M4.500 0v4.500H0" /></Ico>
      <div className="absolute left-[1346px] top-[171px] h-[44px] w-[12px] overflow-hidden">
        <div className="h-[44px] w-[44px] rounded-full border-2 border-[#87a58c] bg-[#35a853] pl-[5px] font-['Liberation_Sans'] text-[13px] font-bold italic leading-[40px] text-[#eef7ef]">7</div>
      </div>
    </div>
  );
}
